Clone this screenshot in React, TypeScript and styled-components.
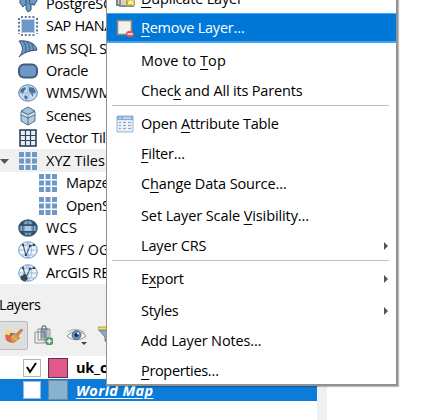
import React from 'react';
import styled, { createGlobalStyle } from 'styled-components';

const GlobalStyle = createGlobalStyle`
  * { box-sizing: border-box; }
  body { margin: 0; background: #fff; overflow: hidden; }
`;

const Screen = styled.main`
  position: relative;
  width: 422px;
  height: 420px;
  overflow: hidden;
  background: #fff;
  color: #000;
  font: 14.5px/20px "Open Sans", "Noto Sans", sans-serif;
  white-space: nowrap;
  svg { display: block; flex: none; }
`;

const Docks = styled.div`
  width: 327px;
  height: 420px;
  display: flex;
  flex-direction: column;
  overflow: hidden;
`;

const Tree = styled.div`
  flex: none;
  height: 284px;
  overflow: hidden;
`;

const TreeList = styled.div`
  width: 106px;
  margin-top: -7.6px;
  display: grid;
  grid-auto-rows: 22.45px;
`;

const TreeRow = styled.div<{ $child?: boolean; $active?: boolean }>`
  display: grid;
  grid-template-columns: ${p => (p.$child ? '38px' : '18px')} 28px 1fr;
  align-items: center;
  background: ${p => (p.$active ? '#f0f0f0' : 'transparent')};
`;

const Label = styled.span<{ $spacing?: number }>`
  overflow: hidden;
  letter-spacing: ${p => p.$spacing ?? -0.3}px;
`;

const LayersPanel = styled.section`
  flex: 1;
  background: #f0f0f0;
`;

const PanelTitle = styled.header`
  height: 37px;
  padding-top: 11px;
  margin-left: -1px;
  letter-spacing: -0.4px;
`;

const Toolbar = styled.div`
  display: flex;
  height: 35px;
`;

const ToolButton = styled.div<{ $width: number; $pressed?: boolean }>`
  width: ${p => p.$width}px;
  height: 29px;
  display: flex;
  align-items: center;
  justify-content: center;
  border: 1px solid ${p => (p.$pressed ? '#b9b9b9' : 'transparent')};
  border-left-color: transparent;
  border-radius: 0 3px 3px 0;
  background: ${p => (p.$pressed ? '#dedede' : 'transparent')};
`;

const LayerList = styled.div`
  width: 317px;
  height: 64px;
  background: #fff;
`;

const LayerRow = styled.div<{ $selected?: boolean }>`
  height: ${p => (p.$selected ? 22 : 23)}px;
  padding-left: 23px;
  display: flex;
  align-items: center;
  background: ${p => (p.$selected ? '#0c7cd8' : '#fff')};
  color: ${p => (p.$selected ? '#fff' : '#000')};
`;

const CheckBox = styled.span<{ $on?: boolean }>`
  width: 18px;
  height: 18px;
  margin-right: 7px;
  display: grid;
  place-items: center;
  background: #fff;
  border: 1px solid ${p => (p.$on ? '#b4b4b4' : '#8dbbe4')};
`;

const Swatch = styled.span<{ $fill: string; $edge: string }>`
  width: 20px;
  height: 20px;
  margin-right: 8px;
  border: 1px solid ${p => p.$edge};
  background: ${p => p.$fill};
`;

const LayerName = styled.span<{ $current?: boolean }>`
  padding-top: ${p => (p.$current ? 1 : 0)}px;
  font-weight: 700;
  font-style: ${p => (p.$current ? 'italic' : 'normal')};
  text-decoration: ${p => (p.$current ? 'underline' : 'none')};
  text-decoration-thickness: 1px;
  text-underline-offset: 2px;
  letter-spacing: ${p => (p.$current ? 0.36 : -0.2)}px;
`;

const Menu = styled.div`
  position: absolute;
  left: 106px;
  top: -15px;
  width: 292px;
  height: 401px;
  border: solid #919392;
  border-width: 1px 2px 2px 1px;
  background: #fff;
  box-shadow: 1px 1px 1px rgba(0, 0, 0, 0.25);
`;

const MenuRow = styled.div<{ $height: number; $active?: boolean; $drop?: number }>`
  height: ${p => p.$height}px;
  display: grid;
  grid-template-columns: 34px 1fr 12px;
  align-items: center;
  padding-top: ${p => p.$drop ?? 0}px;
  padding-bottom: ${p => (p.$active ? 0 : 1)}px;
  background: ${p => (p.$active ? '#0078d7' : 'transparent')};
  border: solid #42a5f5;
  border-width: ${p => (p.$active ? '1px 0 2px' : '0')};
  color: ${p => (p.$active ? '#fff' : '#000')};
  u { text-decoration-thickness: 1px; text-underline-offset: 3px; }
`;

const MenuIcon = styled.span`
  padding-left: 9px;
`;

const Separator = styled.div`
  height: 1px;
  margin: 0 7px 0 5px;
  background: #bfbfbf;
`;

const BLUE = '#6d98c8';
const DARK = '#34536f';

const Icon = ({ children, w = 20, h = 18 }: { children: React.ReactNode; w?: number; h?: number }) => (
  <svg width={w} height={h} viewBox={`0 0 ${w} ${h}`} fill="none">{children}</svg>
);

const PostgresIcon = () => (
  <Icon><path d="M2 1h15l2 5-3 4-3-1v6l-3 2-2-3V9l-3 3-3-4z" fill={BLUE} stroke={DARK} /><path d="M8 2v8m4-7-1 5 2 2M14 9l3 1" stroke={DARK} /></Icon>
);

const HanaIcon = () => (
  <Icon h={20}>
    <path d="M3 3h14v14H3z" fill={BLUE} />
    <path d="M3 1h15M3 19h15" stroke={DARK} strokeWidth="1.6" strokeDasharray="2 1.8" />
    <path d="M1 2v16M19 2v16" stroke={DARK} strokeWidth="1.6" strokeDasharray="2 1.8" />
    <path d="M3.5 3.5h13v13h-13z" stroke="#c0d3e8" />
  </Icon>
);

const MssqlIcon = () => (
  <Icon>
    <path d="M1 1c8-1 17 2 18 9l-7 1c-4 1-8 3-11 6 5-6 4-11 0-16z" fill={BLUE} stroke={DARK} />
    <path d="M5 1c3 4 4 8 2 12M9 2c3 4 3 7 2 10M13 3c2 3 3 5 2 8" stroke={DARK} strokeWidth=".9" />
  </Icon>
);

const OracleIcon = () => (
  <Icon><rect x="1" y="2.5" width="18" height="13" rx="5" fill={BLUE} stroke="#415e7c" strokeWidth="2" /></Icon>
);

const WmsIcon = () => (
  <Icon>
    <ellipse cx="10" cy="9" rx="9.3" ry="8.2" fill="#c7daec" stroke="#5f84ad" />
    <path d="M3 5l4-2 1 2-2 2-1 3-3-2zM7 11l3 2-2 3-2-3zM11 3l5 1 2 4-3 2v3l-2-3-2-3z" fill="#48739f" />
    <path d="M1 9h18M10 1v16" stroke="#8daccb" strokeWidth=".7" />
  </Icon>
);

const ScenesIcon = () => (
  <Icon h={20}>
    <path d="M3 6l7-4 7 4v9l-7 4-7-4z" fill="#b3cce3" stroke="#4f6d89" />
    <path d="M3 5l7 3.5L17 5l-7-4z" fill="#a7c4df" stroke="#4f6d89" />
    <path d="M3 7.5l7 3.5 7-3.5" stroke="#fff" />
    <path d="M10 10v9M3 8.500l7 3.500 7-3.500" stroke="#4f6d89" />
  </Icon>
);

const VectorTilesIcon = () => (
  <Icon>
    <path d="M2 1h16v16H2z" fill="#e7eef5" stroke="#20384e" strokeWidth="1.5" />
    <path d="M7.500 1v16M12.500 1v16M2 6.500h16M2 11.500h16" stroke="#29445d" strokeWidth="1.200" />
  </Icon>
);

const TilesIcon = () => (
  <Icon>
    {[0, 6.5, 13].flatMap(y => [1, 7.5, 14].map(x => (
      <rect key={`${x}-${y}`} x={x} y={y} width="5" height="5" fill={BLUE} />
    )))}
  </Icon>
);

const WcsIcon = () => (
  <Icon>
    <ellipse cx="10" cy="9" rx="9" ry="8" fill="#7fa7d0" stroke="#3c5873" strokeWidth="1.6" />
    <path d="M3 6.200h14M3 12.800h14" stroke="#34506b" strokeWidth="1.800" />
    <path d="M2 5l3-3 1 3-1 2H2zM18 5l-3-3-1 3 1 2h3zM2 13l3 3 2-1-2-3H2zM18 13l-3 3-2-1 2-3h3z" fill="#34506b" />
    <path d="M10 1v16M7 2c-3 4-3 10 0 14M13 2c3 4 3 10 0 14" stroke="#34506b" strokeWidth=".9" />
    <path d="M7 7h6v5H7z" fill="#a9c9e9" />
  </Icon>
);

const FeatureIcon = ({ arcgis = false }: { arcgis?: boolean }) => (
  <Icon>
    <ellipse cx="10" cy="9" rx="9.3" ry="8.2" fill="#edf4fb" stroke="#719ac4" />
    <path d="M1 9h18M3 4h14M3 14h14M10 1v16M10 1c-5 4-5 12 0 16M10 1c5 4 5 12 0 16" stroke="#8cb0d4" strokeWidth=".8" />
    <path d="M5 4l3 10 4-9 4-1" stroke="#4c5c6d" strokeWidth="1" />
    <g fill="#34495d"><circle cx="5" cy="4" r="1.2" /><circle cx="8" cy="14" r="1.2" /><circle cx="12" cy="5" r="1.2" /><circle cx="16" cy="4" r="1.2" /></g>
    {arcgis && <path d="M2 12l3-1 1-2 3 2 1 4-3 3-4-2z" fill="#34495d" stroke="#dae7f2" strokeWidth=".8" strokeDasharray="1 1.5" />}
  </Icon>
);

const BrushIcon = () => (
  <Icon w={20} h={20}>
    <path d="M1 5c3-2 5 0 8-1v6H1z" fill="#f4dd75" /><path d="M1 9c3-1 4 1 7 0l3 7c-3 2-7 0-9-2z" fill="#e8604d" /><path d="M6 7h5v5H6z" fill="#4c79c2" />
    <path d="M12 8l5-5 2 1-5 6z" fill="#d28b35" stroke="#a87035" strokeWidth=".6" />
    <path d="M8 9c1-1 3-2 4-1l4 4c-2 1-3 3-5 4-3 0-4-2-5-4z" fill="#dc9b42" stroke="#b9853f" strokeWidth=".6" />
    <path d="M8 10l5 4" stroke="#f4ca7b" />
  </Icon>
);

const AddGroupIcon = () => (
  <Icon w={20} h={21}>
    <path d="M1 7h10v11H1zM4 4h10v11H4zM7 4h9v10H7z" stroke="#858d8c" />
    <path d="M8 13V3c0-3 4-3 4 0v10M10 4v9" stroke="#4b6883" strokeWidth="1.100" />
    <rect x="11.500" y="12.500" width="7.500" height="7.500" rx="2" fill="#539760" /><path d="M13 16.200h4.600M15.300 14v4.600" stroke="#fff" strokeWidth="1.4" />
  </Icon>
);

const EyeIcon = () => (
  <Icon w={22} h={20}>
    <path d="M1 10c5-6 14-6 19 0-5 5-14 5-19 0z" fill="#f5f5f3" stroke="#8b9191" />
    <path d="M2 6c5-4 12-3 17 1" stroke="#a5a9a9" />
    <circle cx="10.5" cy="9" r="4.4" fill="#628fc0" stroke="#456d99" /><circle cx="10.5" cy="9" r="2" fill="#172e47" /><circle cx="12" cy="7.5" r="1" fill="#fff" />
    <path d="M15 16h6l-3 3z" fill="#444" />
  </Icon>
);

const FilterIcon = () => (
  <Icon w={18} h={20}><path d="M1 4h16l-6 7v7l-4-3v-4z" fill="#83a9cc" stroke="#637e96" /><path d="M0 1h18v3H0z" fill="#f6df48" stroke="#777a59" strokeWidth=".6" /></Icon>
);

const DuplicateIcon = () => (
  <Icon><path d="M1 1h14v14H1z" fill="#dbdcd8" stroke="#7f807b" strokeWidth="2" /><path d="M4 3h13v13H4z" fill="#d4d4cf" stroke="#8b8c86" strokeWidth="2" /><rect x="10" y="8" width="9" height="8" rx="1" fill="#bda83a" /><path d="M14.5 8l1 3 3-1-1.5 2 1 3-3.5-1-3 1 1-3-1.5-2 3 1z" fill="#fff5a4" /></Icon>
);

const RemoveIcon = () => (
  <Icon><path d="M1.5 1.5h14v14h-14z" fill="#f1f1ef" stroke="#858781" strokeWidth="1.6" /><rect x="10" y="12" width="8" height="6" rx="3" fill="#e64f54" /><path d="M11.5 15h5" stroke="#fff" strokeWidth="1.5" /></Icon>
);

const TableIcon = () => (
  <Icon h={18}><path d="M1 1h16v16H1z" fill="#e2ecf6" stroke="#9db9d5" /><path d="M1 1h16v4H1z" fill="#85add8" /><path d="M3 3h2m2 0h8" stroke="#f6fbff" /><path d="M3 7.500h2m2 0h3m2 0h3M3 10.500h2m2 0h3m2 0h3M3 13.5h2m2 0h3m2 0h3" stroke="#8aa9ca" /><path d="M6 6v10M11 6v10" stroke="#fff" /></Icon>
);

const Arrow = () => (
  <Icon w={5} h={10}><path d="M0 1l4 4-4 4z" fill="#555" /></Icon>
);

const treeItems = [
  { name: 'PostgreSQ', icon: <PostgresIcon /> },
  { name: 'SAP HANA', icon: <HanaIcon /> },
  { name: 'MS SQL S', icon: <MssqlIcon /> },
  { name: 'Oracle', icon: <OracleIcon /> },
  { name: 'WMS/WM', icon: <WmsIcon />, spacing: -0.1 },
  { name: 'Scenes', icon: <ScenesIcon /> },
  { name: 'Vector Til', icon: <VectorTilesIcon /> },
  { name: 'XYZ Tiles', icon: <TilesIcon />, active: true, spacing: 0 },
  { name: 'Mapze', icon: <TilesIcon />, child: true },
  { name: 'OpenS', icon: <TilesIcon />, child: true },
  { name: 'WCS', icon: <WcsIcon />, spacing: 0.2 },
  { name: 'WFS / OG', icon: <FeatureIcon />, spacing: 0 },
  { name: 'ArcGIS RE', icon: <FeatureIcon arcgis />, spacing: -0.25 },
];

type Entry = {
  label?: React.ReactNode;
  height?: number;
  spacing?: number;
  drop?: number;
  icon?: React.ReactNode;
  submenu?: boolean;
  active?: boolean;
};

const menuItems: Entry[] = [
  { label: <><u>D</u>uplicate Layer</>, height: 27, spacing: -0.2, icon: <DuplicateIcon /> },
  { label: <><u>R</u>emove Layer…</>, height: 30, spacing: -0.24, icon: <RemoveIcon />, active: true, drop: 1 },
  { label: <>Move to <u>T</u>op</>, height: 35, spacing: 0.06, drop: 2 },
  { label: <>Chec<u>k</u> and All its Parents</>, height: 27, spacing: -0.17 },
  {},
  { label: <>Open <u>A</u>ttribute Table</>, height: 36, spacing: -0.2, icon: <TableIcon /> },
  { label: <><u>F</u>ilter…</>, height: 25, spacing: -0.22 },
  { label: <>C<u>h</u>ange Data Source…</>, height: 34, spacing: -0.14 },
  { label: <>Set Layer Scale <u>V</u>isibility…</>, height: 30, spacing: -0.1 },
  { label: 'Layer CRS', height: 29, spacing: -0.16, submenu: true, drop: 2 },
  {},
  { label: <>E<u>x</u>port</>, height: 37, spacing: -0.3, submenu: true },
  { label: 'Styles', height: 27, spacing: -0.28, submenu: true },
  { label: 'Add Layer Notes…', height: 33, spacing: -0.13 },
  { label: <><u>P</u>roperties…</>, height: 26, spacing: -0.34 },
];

export default function App() {
  return (
    <Screen>
      <GlobalStyle />
      <Docks>
        <Tree>
          <TreeList>
            {treeItems.map(item => (
              <TreeRow key={item.name} $child={item.child} $active={item.active}>
                <span>{item.active && <Icon w={9} h={6}><path d="M0 1h9L4.5 6z" fill="#555" /></Icon>}</span>
                {item.icon}
                <Label $spacing={item.spacing}>{item.name}</Label>
              </TreeRow>
            ))}
          </TreeList>
        </Tree>
        <LayersPanel>
          <PanelTitle>Layers</PanelTitle>
          <Toolbar>
            <ToolButton $width={28} $pressed><BrushIcon /></ToolButton>
            <ToolButton $width={32}><AddGroupIcon /></ToolButton>
            <ToolButton $width={34}><EyeIcon /></ToolButton>
            <ToolButton $width={26}><FilterIcon /></ToolButton>
          </Toolbar>
          <LayerList>
            <LayerRow>
              <CheckBox $on><Icon w={14} h={14}><path d="M2 6l3 5 6-9" stroke="#000" strokeWidth="2" /></Icon></CheckBox>
              <Swatch $fill="#e15989" $edge="#60304c" />
              <LayerName>uk_o</LayerName>
            </LayerRow>
            <LayerRow $selected>
              <CheckBox />
              <Swatch $fill="#88b3d0" $edge="#6c8a9e" />
              <LayerName $current>World Map</LayerName>
            </LayerRow>
          </LayerList>
        </LayersPanel>
      </Docks>
      <Menu>
        {menuItems.map((item, i) =>
          item.label ? (
            <MenuRow key={i} $height={item.height!} $active={item.active} $drop={item.drop}>
              <MenuIcon>{item.icon}</MenuIcon>
              <Label $spacing={item.spacing}>{item.label}</Label>
              {item.submenu && <Arrow />}
            </MenuRow>
          ) : (
            <Separator key={i} />
          ),
        )}
      </Menu>
    </Screen>
  );
}
